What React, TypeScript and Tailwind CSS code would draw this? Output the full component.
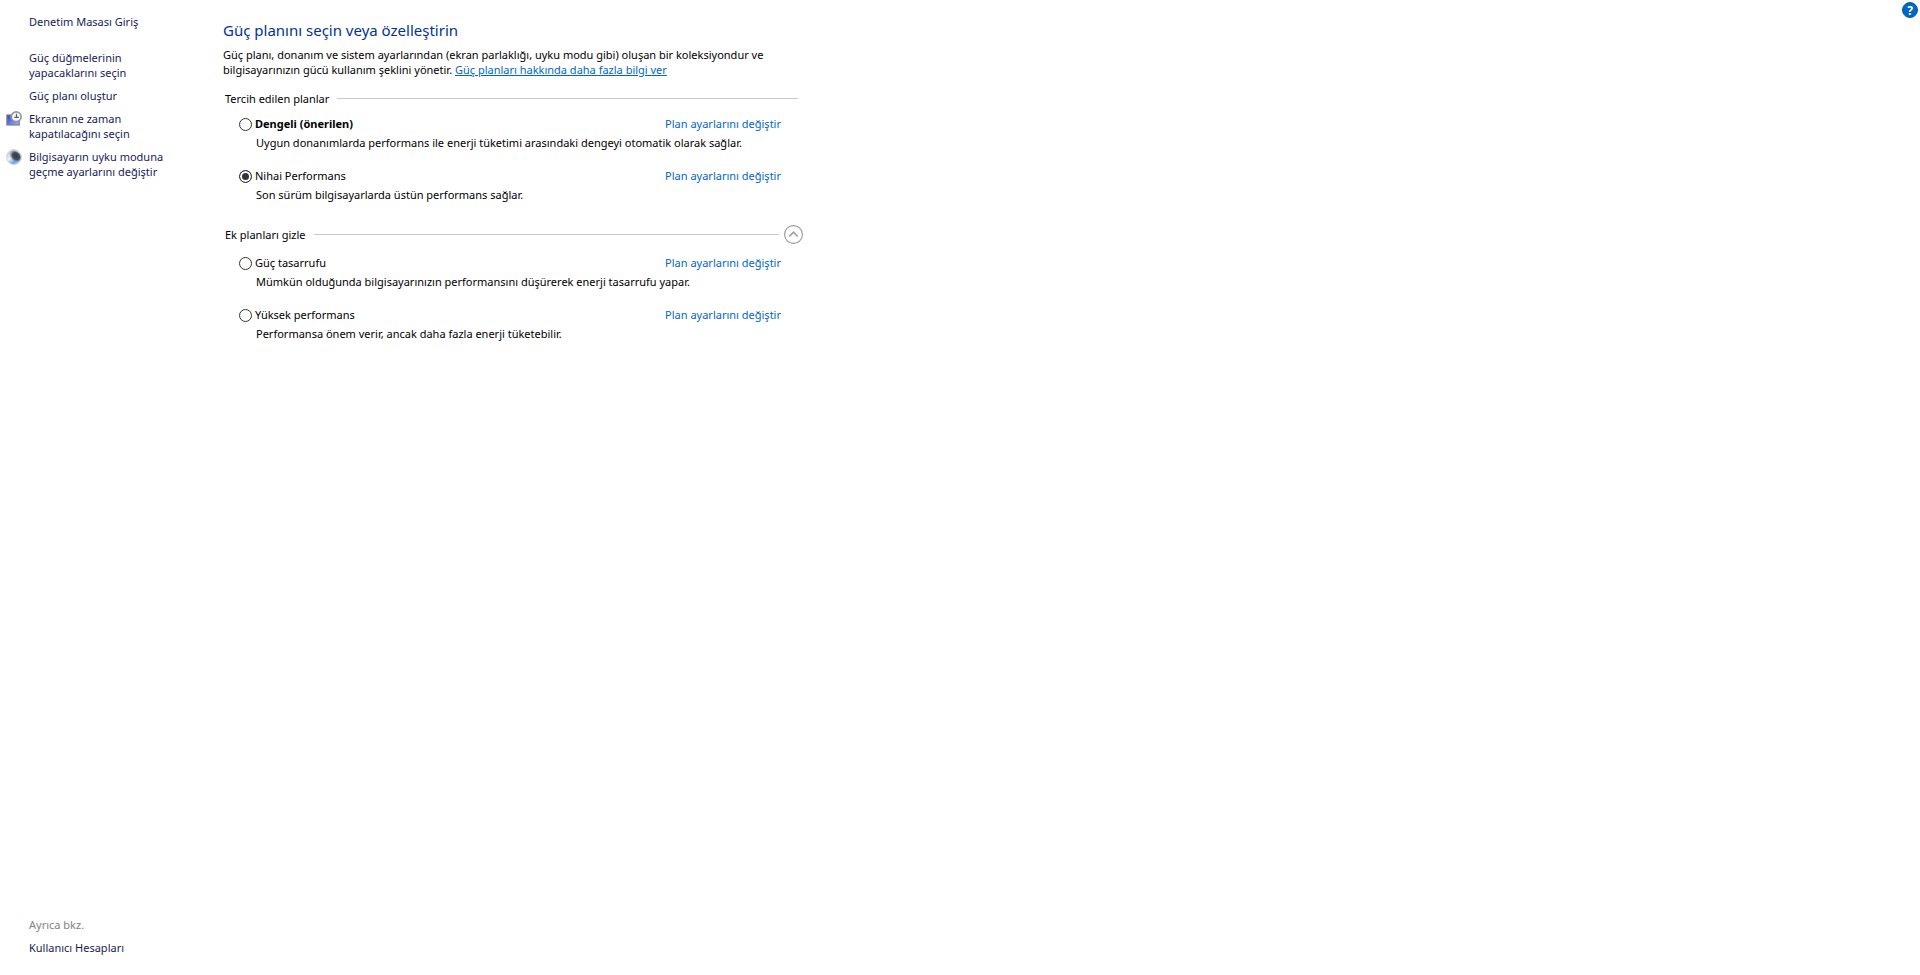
import React, { useState } from "react";

interface Plan {
  id: string;
  name: string;
  description: string;
  recommended?: boolean;
}

const preferredPlans: Plan[] = [
  {
    id: "balanced",
    name: "Dengeli (önerilen)",
    description:
      "Uygun donanımlarda performans ile enerji tüketimi arasındaki dengeyi otomatik olarak sağlar.",
    recommended: true,
  },
  {
    id: "ultimate",
    name: "Nihai Performans",
    description: "Son sürüm bilgisayarlarda üstün performans sağlar.",
  },
];

const extraPlans: Plan[] = [
  {
    id: "saver",
    name: "Güç tasarrufu",
    description:
      "Mümkün olduğunda bilgisayarınızın performansını düşürerek enerji tasarrufu yapar.",
  },
  {
    id: "high",
    name: "Yüksek performans",
    description: "Performansa önem verir, ancak daha fazla enerji tüketebilir.",
  },
];

const DisplayClockIcon = () => (
  <svg width="16" height="16" viewBox="0 0 16 16" aria-hidden="true">
    <defs>
      <linearGradient id="screen" x1="0" y1="0" x2="1" y2="1">
        <stop offset="0" stopColor="#2b3fc8" />
        <stop offset="1" stopColor="#9db4ff" />
      </linearGradient>
    </defs>
    <rect x="0.9" y="4" width="12.4" height="10" fill="url(#screen)" stroke="#7d7f8c" strokeWidth="1.2" />
    <circle cx="10.2" cy="5.8" r="4.9" fill="#f1f5f7" stroke="#969899" strokeWidth="1.7" />
    <path d="M10.5 2.8v3.7M8.4 6.4h4.4" stroke="#4a6074" strokeWidth="1.1" fill="none" />
  </svg>
);

const MoonIcon = () => (
  <svg width="16" height="16" viewBox="0 0 16 16" aria-hidden="true">
    <defs>
      <linearGradient id="moon" x1="0.1" y1="0.1" x2="0.7" y2="1">
        <stop offset="0" stopColor="#c6c8cb" />
        <stop offset="0.45" stopColor="#eef3fa" />
        <stop offset="0.8" stopColor="#6f9ff0" />
        <stop offset="1" stopColor="#b5cdf2" />
      </linearGradient>
      <radialGradient id="shade" cx="0.55" cy="0.45" r="0.5">
        <stop offset="0" stopColor="#343a45" />
        <stop offset="0.65" stopColor="#454d5c" />
        <stop offset="1" stopColor="#7e8ba3" stopOpacity="0.6" />
      </radialGradient>
    </defs>
    <circle cx="8" cy="8" r="7.4" fill="url(#moon)" stroke="#d0d2d6" strokeWidth="1" />
    <ellipse cx="9.2" cy="7" rx="6.1" ry="4.8" transform="rotate(45 9.2 7)" fill="url(#shade)" />
  </svg>
);

const sideTasks = [
  { text: ["Güç düğmelerinin", "yapacaklarını seçin"], icon: null },
  { text: ["Güç planı oluştur"], icon: null },
  { text: ["Ekranın ne zaman", "kapatılacağını seçin"], icon: <DisplayClockIcon /> },
  { text: ["Bilgisayarın uyku moduna", "geçme ayarlarını değiştir"], icon: <MoonIcon /> },
];

interface PlanRowProps {
  plan: Plan;
  checked: boolean;
  onSelect: (id: string) => void;
}

const PlanRow: React.FC<PlanRowProps> = ({ plan, checked, onSelect }) => (
  <li>
    <div className="flex items-end justify-between">
      <div className="flex items-end gap-[3px]">
        <input
          type="radio"
          name="plan"
          id={plan.id}
          checked={checked}
          onChange={() => onSelect(plan.id)}
          className="size-[13px] appearance-none rounded-full border border-[#333] bg-white checked:bg-[#333] checked:shadow-[inset_0_0_0_2px_white]"
        />
        <label htmlFor={plan.id} className={plan.recommended ? "font-bold" : ""}>
          {plan.name}
        </label>
      </div>
      <a href="#" className="text-[#0066cc]">
        Plan ayarlarını değiştir
      </a>
    </div>
    <p className="mt-1 pl-[17px]">{plan.description}</p>
  </li>
);

const App: React.FC = () => {
  const [selected, setSelected] = useState("ultimate");
  const [expanded, setExpanded] = useState(true);

  return (
    <div className="flex min-h-screen bg-white font-['Noto_Sans',sans-serif] text-[11px] leading-[15px] text-black">
      {/* Sidebar */}
      <aside className="flex w-[223px] shrink-0 flex-col justify-between pt-[14px] pb-5 pl-[6px] text-[#151c55]">
        <nav>
          <a href="#" className="ml-[23px] block">
            Denetim Masası Giriş
          </a>
          <ul className="mt-[21px] space-y-2">
            {sideTasks.map((task) => (
              <li key={task.text[0]} className="flex gap-[7px]">
                <span className="h-[15px] w-4 shrink-0">{task.icon}</span>
                <a href="#">
                  {task.text.map((line) => (
                    <span key={line} className="block">
                      {line}
                    </span>
                  ))}
                </a>
              </li>
            ))}
          </ul>
        </nav>

        <div className="ml-[23px] space-y-2">
          <p className="text-[#838383]">Ayrıca bkz.</p>
          <a href="#" className="block">
            Kullanıcı Hesapları
          </a>
        </div>
      </aside>

      {/* Plans */}
      <main className="w-full max-w-[580px] pt-5">
        <h1 className="text-[15px] leading-5 text-[#003399]">Güç planını seçin veya özelleştirin</h1>
        <p className="mt-[7px]">
          Güç planı, donanım ve sistem ayarlarından (ekran parlaklığı, uyku modu gibi) oluşan bir koleksiyondur ve
          <br />
          bilgisayarınızın gücü kullanım şeklini yönetir.{" "}
          <a href="#" className="text-[#0066cc] underline">
            Güç planları hakkında daha fazla bilgi ver
          </a>
        </p>

        <section className="mt-[14px]">
          <div className="flex items-center gap-2 pr-[5px] pl-[2px]">
            <h2>Tercih edilen planlar</h2>
            <span className="h-px flex-1 bg-[#cacaca]" />
          </div>
          <ul className="mt-[10px] space-y-[18px] pr-[22px] pl-4">
            {preferredPlans.map((plan) => (
              <PlanRow key={plan.id} plan={plan} checked={selected === plan.id} onSelect={setSelected} />
            ))}
          </ul>
        </section>

        <section className="mt-[23px]">
          <div className="flex items-center pl-[2px]">
            <h2>Ek planları gizle</h2>
            <span className="mr-[5px] ml-2 h-px flex-1 bg-[#cacaca]" />
            <button type="button" aria-label="Ek planları gizle" onClick={() => setExpanded(!expanded)}>
              <svg width="19" height="19" viewBox="0 0 19 19" fill="none" className={expanded ? "" : "rotate-180"}>
                <circle cx="9.5" cy="9.5" r="8.9" stroke="#999" strokeWidth="1.1" />
                <path d="M5.3 11.5l4.2-4.3 4.2 4.3" stroke="#a0a0a0" strokeWidth="1.7" />
              </svg>
            </button>
          </div>
          {expanded && (
            <ul className="mt-[11px] space-y-[18px] pr-[22px] pl-4">
              {extraPlans.map((plan) => (
                <PlanRow key={plan.id} plan={plan} checked={selected === plan.id} onSelect={setSelected} />
              ))}
            </ul>
          )}
        </section>
      </main>

      {/* Help */}
      <div className="ml-auto pt-[2px] pr-[2px]">
        <button
          type="button"
          aria-label="Yardım"
          className="flex size-4 items-center justify-center rounded-full border border-[#0a5ca8] bg-[#0067c5] text-[12px] font-bold text-white"
        >
          ?
        </button>
      </div>
    </div>
  );
};

export default App;
